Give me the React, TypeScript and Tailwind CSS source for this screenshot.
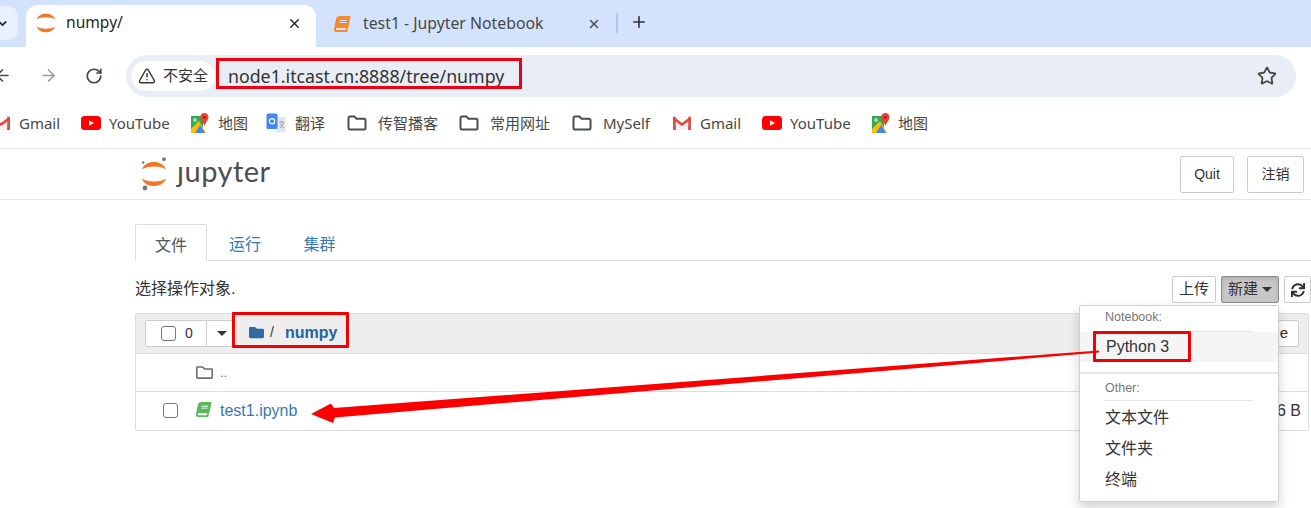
import { ArrowLeft, ArrowRight, ChevronDown, Plus, RotateCw, Star, TriangleAlert, X } from "lucide-react";
import { FaBook, FaFolder, FaRegFolder, FaSync } from "react-icons/fa";

const chrome = "font-['Noto_Sans','Noto_Sans_CJK_SC',sans-serif]";
const page = "font-['Liberation_Sans','Noto_Sans_CJK_SC',sans-serif]";

function JupyterRing({ size = 26 }: { size?: number }) {
  return (
    <svg width={size} height={(size * 34) / 26} viewBox="0 0 26 34">
      <path d="M1 12.5C3.5 2.5 22 2.5 25 12.5C20 8.6 6 8.6 1 12.5Z" fill="#f37726" />
      <path d="M1 21.5C3.5 31.5 22 31.5 25 21.5C20 25.4 6 25.4 1 21.5Z" fill="#f37726" />
      {size > 20 && <circle cx="23" cy="2.2" r="1.9" fill="#767677" />}
      {size > 20 && <circle cx="2.2" cy="5.5" r="1.2" fill="#767677" />}
      {size > 20 && <circle cx="4" cy="31" r="2.4" fill="#767677" />}
    </svg>
  );
}

function GmailIcon() {
  return (
    <svg width="20" height="16" viewBox="0 0 20 16">
      <path d="M1 3L10 9.5L19 3V15H1Z" fill="#f1f1f1" />
      <path d="M1 15V2.5L3.5 1L4 15Z" fill="#d9534a" />
      <path d="M19 15V2.5L16.5 1L16 15Z" fill="#d9534a" />
      <path d="M1.5 1.5L10 8L18.5 1.5L18.8 4.8L10 11L1.2 4.8Z" fill="#ea4335" />
    </svg>
  );
}

function YoutubeIcon() {
  return (
    <svg width="20" height="14" viewBox="0 0 20 14">
      <rect width="20" height="14" rx="3.5" fill="#ff0000" />
      <path d="M8 4.2L13 7L8 9.8Z" fill="#ffffff" />
    </svg>
  );
}

function MapsIcon() {
  return (
    <svg width="20" height="21" viewBox="0 0 20 21">
      <path d="M1 3H13V20H1Z" fill="#34a853" />
      <path d="M1 16L9 8L16 20H1Z" fill="#fbbc04" />
      <path d="M5 20L10 12L15 20Z" fill="#4285f4" />
      <circle cx="5" cy="7" r="2" fill="#a8dab5" />
      <path d="M14.5 0C11.8 0 10.2 2 10.2 4.2C10.2 7 13.5 9.5 14.5 13C15.5 9.5 18.5 7 18.5 4.2C18.5 2 17 0 14.5 0Z" fill="#ea4335" />
      <circle cx="14.4" cy="4.2" r="1.3" fill="#8c1c13" />
    </svg>
  );
}

function TranslateIcon() {
  return (
    <svg width="20" height="21" viewBox="0 0 20 21">
      <path d="M8 4H18A1.5 1.5 0 0 1 19.5 5.5V18A1.5 1.5 0 0 1 18 19.5H10Z" fill="#e3e6ea" />
      <rect x="0.5" y="0.5" width="11" height="15.5" rx="1.5" fill="#4285f4" />
      <circle cx="6" cy="8.2" r="2.6" fill="none" stroke="#ffffff" strokeWidth="1.2" />
      <path d="M13 9H18M15.5 8V9.5M14 15C16 13.5 17 12 17.2 9.5M14.5 11C15 12.8 16.5 14 18 15" stroke="#8d99a8" strokeWidth="0.9" fill="none" />
    </svg>
  );
}

function FolderIcon() {
  return (
    <svg width="20" height="16" viewBox="0 0 20 16" fill="none" stroke="#4a4d51" strokeWidth="2">
      <path d="M1.5 3A1.5 1.5 0 0 1 3 1.5H7.5L9.5 3.7H17A1.5 1.5 0 0 1 18.5 5.2V13A1.5 1.5 0 0 1 17 14.5H3A1.5 1.5 0 0 1 1.5 13Z" />
    </svg>
  );
}

function Bookmark({ icon, label, width, gap = "gap-[8px]" }: { icon: React.ReactNode; label: string; width: string; gap?: string }) {
  return (
    <div className={`flex items-center shrink-0 ${gap} ${width}`}>
      {icon}
      <span className="text-[15px] text-[#474747] whitespace-nowrap">{label}</span>
    </div>
  );
}

function TabStrip() {
  return (
    <div className="flex h-[47px] bg-[#d3e3fd] pt-[5px] overflow-hidden">
      <div className="w-[18px] h-[34px] mt-[1px] bg-[#e9f0fd] rounded-r-[10px] flex items-center shrink-0">
        <ChevronDown size={13} strokeWidth={3} color="#1f1f1f" className="-ml-[4px]" />
      </div>
      <div className="ml-[8px] w-[290px] bg-white rounded-t-[12px] flex items-center pl-[10px] pr-[14px] pb-[6px] shrink-0">
        <JupyterRing size={20} />
        <span className="ml-[10px] text-[15.6px] text-[#1f1f1f] flex-1">numpy/</span>
        <X size={15} strokeWidth={2.5} color="#333333" />
      </div>
      <div className="w-[300px] flex items-center pl-[18px] pr-[15px] pb-[5px] shrink-0">
        <FaBook size={16} color="#f48a2a" className="-skew-x-12" />
        <span className="ml-[13px] text-[15.8px] text-[#474747] flex-1">test1 - Jupyter Notebook</span>
        <X size={14} strokeWidth={2.5} color="#474747" />
      </div>
      <div className="w-[2px] h-[20px] mt-[8px] bg-[#a8c7fa] shrink-0" />
      <Plus size={18} strokeWidth={2.2} color="#333333" className="ml-[12px] mt-[8px] shrink-0" />
    </div>
  );
}

function Toolbar() {
  return (
    <div className="flex items-center h-[57px] bg-white pr-[15px]">
      <ArrowLeft size={19} strokeWidth={2} color="#474747" className="-ml-[7px] shrink-0" />
      <ArrowRight size={19} strokeWidth={2} color="#9a9a9a" className="ml-[27px] shrink-0" />
      <RotateCw size={18} strokeWidth={2.3} color="#474747" className="ml-[27px] shrink-0" />
      <div className="ml-[23px] flex-1 h-[42px] rounded-full bg-[#e9eef6] flex items-center pl-[5px] pr-[19px]">
        <div className="h-[30px] w-[84px] rounded-full bg-white flex items-center pl-[7px] shrink-0">
          <TriangleAlert size={18} strokeWidth={2} color="#333333" />
          <span className="ml-[7px] text-[15px] text-[#333333] whitespace-nowrap">不安全</span>
        </div>
        <span className="ml-[13px] mt-[1px] text-[17.75px] text-[#333333] whitespace-nowrap">node1.itcast.cn:8888/tree/numpy</span>
        <Star size={20} strokeWidth={2.2} color="#474747" className="ml-auto" />
      </div>
    </div>
  );
}

function BookmarkBar() {
  return (
    <div className="flex items-center h-[45px] -ml-[9px] pb-[6px] border-b border-[#e3e3e3] overflow-hidden">
      <Bookmark icon={<GmailIcon />} label="Gmail" width="w-[90px]" />
      <Bookmark icon={<YoutubeIcon />} label="YouTube" width="w-[109px]" />
      <Bookmark icon={<MapsIcon />} label="地图" width="w-[76px]" />
      <Bookmark icon={<TranslateIcon />} label="翻译" width="w-[81px]" gap="gap-[9px]" />
      <Bookmark icon={<FolderIcon />} label="传智播客" width="w-[112px]" gap="gap-[11px]" />
      <Bookmark icon={<FolderIcon />} label="常用网址" width="w-[113px]" gap="gap-[11px]" />
      <Bookmark icon={<FolderIcon />} label="MySelf" width="w-[100px]" gap="gap-[11px]" />
      <Bookmark icon={<GmailIcon />} label="Gmail" width="w-[90px]" />
      <Bookmark icon={<YoutubeIcon />} label="YouTube" width="w-[109px]" />
      <Bookmark icon={<MapsIcon />} label="地图" width="w-[76px]" gap="gap-[7px]" />
    </div>
  );
}

function JupyterHeader() {
  return (
    <div className="flex items-center h-[51px] border-b border-[#e7e7e7] pl-[141px] pr-[7px]">
      <JupyterRing />
      <span className="ml-[10px] -mt-[8px] text-[29px] leading-none text-[#4e4e4e] font-['Lato',sans-serif] tracking-[0.5px]">ȷupyter</span>
      <button className="ml-auto h-[37px] w-[54px] border border-[#cccccc] rounded-[2px] text-[14px] text-[#333333]">Quit</button>
      <button className="ml-[13px] h-[37px] w-[57px] border border-[#cccccc] rounded-[2px] text-[14px] text-[#333333]">注销</button>
    </div>
  );
}

function TreeTabs() {
  return (
    <div className="mt-[24px] ml-[135px] flex h-[37px] border-b border-[#dddddd] text-[16px]">
      <div className="w-[72px] h-[37px] pt-[6px] border border-[#dddddd] border-b-white bg-white rounded-t-[2px] flex items-center justify-center text-[#555555]">文件</div>
      <div className="w-[76px] pt-[6px] flex items-center justify-center text-[#337ab7]">运行</div>
      <div className="w-[73px] pt-[6px] flex items-center justify-center text-[#337ab7]">集群</div>
    </div>
  );
}

function ActionRow() {
  return (
    <div className="mt-[15px] ml-[135px] flex items-center h-[27px] text-[16px] text-[#333333]">
      <span className="pb-[2px]">选择操作对象.</span>
      <button className="ml-auto h-[27px] w-[44px] border border-[#cccccc] rounded-[2px] text-[15px]">上传</button>
      <button className="ml-[5px] h-[27px] w-[58px] border border-[#8c8c8c] bg-[#c8c8c8] rounded-[2px] text-[15px] flex items-center justify-center gap-[4px] shadow-[inset_0_2px_4px_rgba(0,0,0,0.13)]">
        新建
        <span className="border-x-[5px] border-t-[5px] border-x-transparent border-t-[#333333]" />
      </button>
      <button className="ml-[5px] h-[27px] w-[27px] border border-[#cccccc] rounded-[2px] flex items-center justify-center shrink-0">
        <FaSync size={14} color="#333333" />
      </button>
    </div>
  );
}

function FileTable() {
  return (
    <div className="mt-[10px] ml-[135px] mr-[2px] border border-[#dddddd] rounded-[2px] text-[13px] text-[#333333]">
      <div className="flex items-center h-[40px] bg-[#eeeeee] border-b border-[#dddddd] pl-[9px] pr-[9px]">
        <div className="flex h-[27px] w-[92px] bg-white border border-[#cccccc] rounded-[2px] shrink-0">
          <div className="w-[61px] flex items-center pl-[15px] gap-[9px] border-r border-[#cccccc]">
            <span className="w-[15px] h-[15px] border border-[#767676] rounded-[3px] bg-white shrink-0" />
            <span className="text-[14px]">0</span>
          </div>
          <div className="flex-1 flex items-center justify-center">
            <span className="border-x-[5px] border-t-[5px] border-x-transparent border-t-[#333333]" />
          </div>
        </div>
        <FaFolder size={15} color="#2f6aa5" className="ml-[12px] -mt-[2px]" />
        <span className="ml-[6px] -mt-[2px] text-[#333333] text-[14px]">/</span>
        <span className="ml-[11px] -mt-[2px] text-[16px] font-bold text-[#23649e]">numpy</span>
        <div className="ml-auto flex gap-[5px] h-[27px] text-[15px]">
          <div className="w-[40px] bg-white border border-[#cccccc] rounded-[2px] pl-[6px] flex items-center">名字</div>
          <div className="w-[50px] bg-white border border-[#cccccc] rounded-[2px] flex items-center justify-end pr-[10px]">Size</div>
        </div>
      </div>
      <div className="flex items-center h-[38px] border-b border-[#dddddd] pl-[60px]">
        <FaRegFolder size={17} color="#6e6e6e" />
        <span className="ml-[7px] text-[#337ab7]">..</span>
      </div>
      <div className="flex items-center h-[38px] pl-[27px] pr-[7px]">
        <span className="w-[15px] h-[15px] -mt-[1px] border border-[#767676] rounded-[3px] bg-white shrink-0" />
        <FaBook size={15} color="#5cb85c" className="ml-[18px] -mt-[4px] -skew-x-12" />
        <span className="ml-[9px] -mt-[1px] text-[16px] text-[#337ab7]">test1.ipynb</span>
        <span className="ml-auto text-[16px] text-[#333333]">26 B</span>
      </div>
    </div>
  );
}

function NewMenu() {
  return (
    <div className={`absolute left-[1079px] top-[305px] w-[200px] h-[197px] bg-white border border-[#d0d0d0] rounded-[2px] shadow-[0_6px_12px_rgba(0,0,0,0.18)] text-[#333333] ${page}`}>
      <div className="pl-[25px] pt-[4px] text-[12.5px] leading-[14px] text-[#777777]">Notebook:</div>
      <div className="mx-[25px] mt-[7px] border-t border-[#e5e5e5]" />
      <div className="h-[30px] bg-[#f5f5f5] pl-[26px] flex items-center text-[16px]">Python 3</div>
      <div className="mt-[10px] h-[2px] bg-[#e5e5e5]" />
      <div className="pl-[25px] pt-[7px] text-[12.5px] leading-[14px] text-[#777777]">Other:</div>
      <div className="mx-[25px] mt-[5px] border-t border-[#e5e5e5]" />
      <div className="h-[31px] mt-[1px] pl-[25px] flex items-center text-[16px]">文本文件</div>
      <div className="h-[31px] pl-[25px] flex items-center text-[16px]">文件夹</div>
      <div className="h-[31px] pl-[25px] flex items-center text-[16px]">终端</div>
    </div>
  );
}

export default function App() {
  return (
    <div className="relative w-[1311px] h-[508px] overflow-hidden bg-white">
      <div className={chrome}>
        <TabStrip />
        <Toolbar />
        <BookmarkBar />
      </div>
      <div className={page}>
        <JupyterHeader />
        <TreeTabs />
        <ActionRow />
        <FileTable />
      </div>
      <NewMenu />
      {/* red annotations drawn over the screenshot */}
      <div className="absolute left-[216px] top-[58px] w-[306px] h-[31px] border-[3px] border-[#ee0010]" />
      <div className="absolute left-[232px] top-[312px] w-[117px] h-[36px] border-[3px] border-[#f50000] rounded-[1px]" />
      <div className="absolute left-[1093px] top-[331px] w-[98px] h-[31px] border-[3px] border-[#f50000] rounded-[1px]" />
      <svg className="absolute left-0 top-0 pointer-events-none" width="1311" height="508">
        <polygon points="1099,350.5 1099,352.5 335,417.5 333,423 311,414 331,403.5 334,408" fill="#fa0000" />
      </svg>
    </div>
  );
}
